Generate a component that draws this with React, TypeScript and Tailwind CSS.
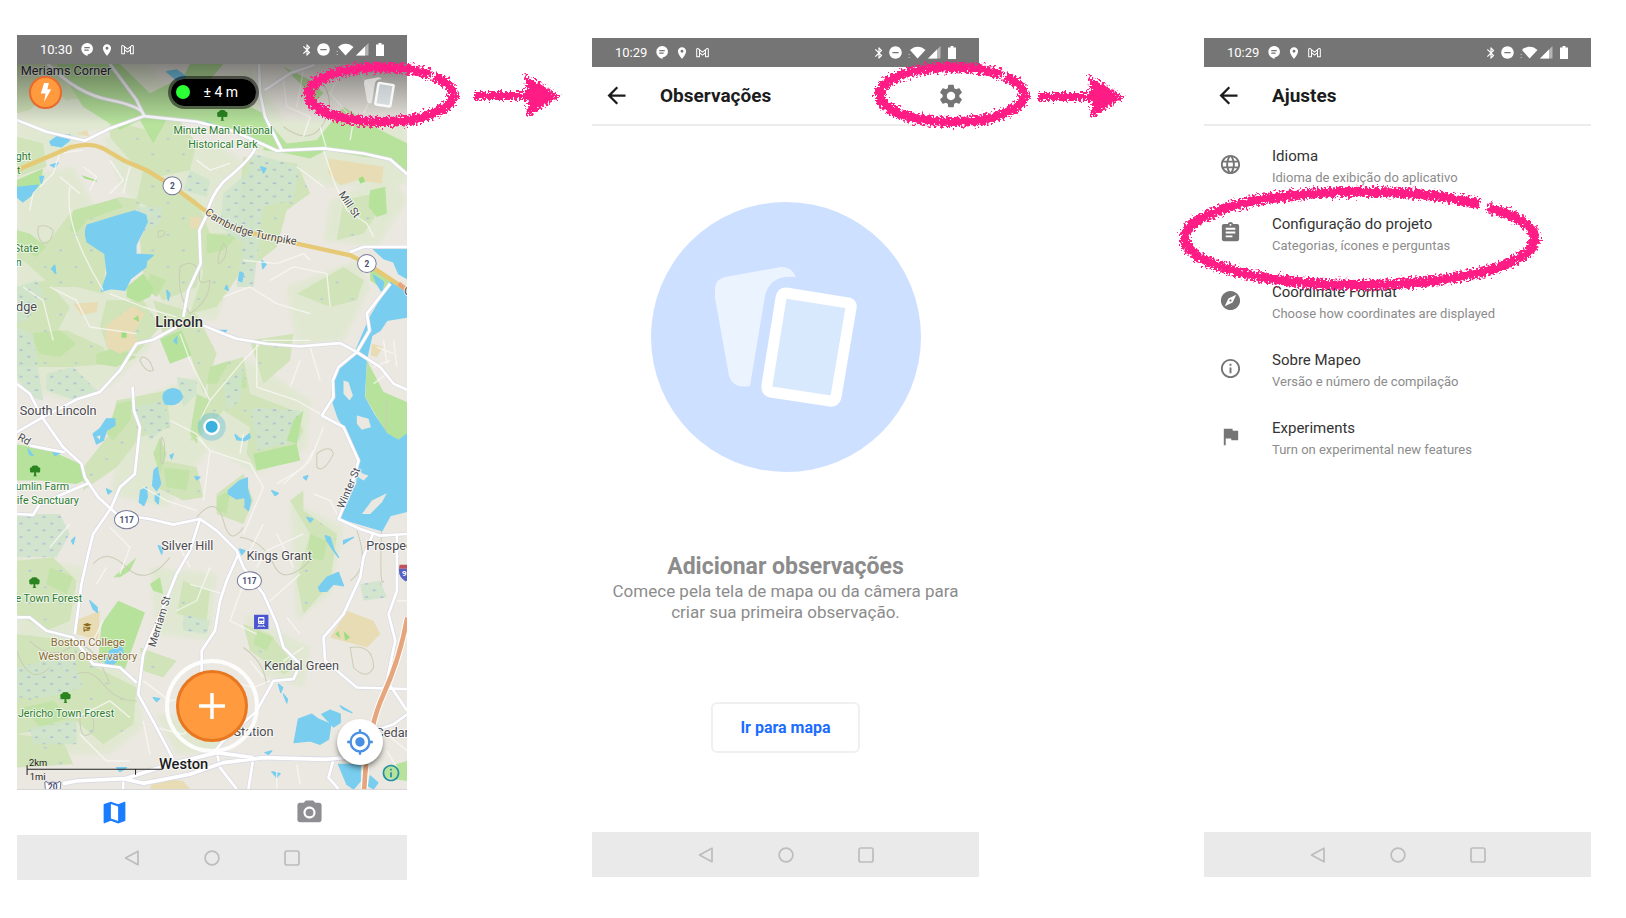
import React from "react";
import {
  MdArrowBack,
  MdAssignment,
  MdBluetooth,
  MdCameraAlt,
  MdExplore,
  MdFlag,
  MdInfoOutline,
  MdLanguage,
  MdMap,
  MdMyLocation,
  MdPlace,
  MdRemoveCircle,
  MdSettings,
} from "react-icons/md";
import type { IconType } from "react-icons";

const PINK = "#ff1a84";

/* ---------- Brush annotations ---------- */

function BrushFilter({ id, seed }: { id: string; seed: number }) {
  return (
    <filter id={id} x="-10%" y="-20%" width="120%" height="140%">
      <feTurbulence type="fractalNoise" baseFrequency="0.42" numOctaves={3} seed={seed} result="noise" />
      <feDisplacementMap in="SourceGraphic" in2="noise" scale={11} xChannelSelector="R" yChannelSelector="G" />
    </filter>
  );
}

function BrushRing({ id, rx, ry, className }: { id: string; rx: number; ry: number; className: string }) {
  const w = rx * 2 + 16;
  const h = ry * 2 + 16;
  const at = (deg: number, k = 1) => {
    const a = (deg * Math.PI) / 180;
    return `${(w / 2 + rx * k * Math.cos(a)).toFixed(1)} ${(h / 2 + ry * k * Math.sin(a)).toFixed(1)}`;
  };
  return (
    <svg
      aria-hidden="true"
      viewBox={`0 0 ${w} ${h}`}
      width={w}
      height={h}
      className={`pointer-events-none absolute z-20 max-w-none overflow-visible ${className}`}
    >
      <BrushFilter id={id} seed={rx} />
      <path
        d={`M${at(-43)} A${rx} ${ry} 0 0 1 ${at(90)} A${rx} ${ry} 0 0 1 ${at(180)} A${rx} ${ry} 0 0 1 ${at(-48, 1.02)}`}
        fill="none"
        stroke={PINK}
        strokeWidth={10}
        filter={`url(#${id})`}
      />
    </svg>
  );
}

function BrushArrow({ id }: { id: string }) {
  return (
    <svg aria-hidden="true" viewBox="0 0 92 52" width={92} height={52} className="shrink-0">
      <BrushFilter id={id} seed={7} />
      <g filter={`url(#${id})`} fill={PINK}>
        <path d="M2 23H56V31H2Z" />
        <path d="M53 5 88 27 56 48Z" />
      </g>
    </svg>
  );
}

/* ---------- Shared phone chrome ---------- */

function StatusBar({ time }: { time: string }) {
  return (
    <div className="flex h-[29px] shrink-0 items-center justify-between bg-[#757575] px-[23px] text-white">
      <div className="flex items-center gap-[7px]">
        <span className="pr-[2px] text-[13px] leading-4">{time}</span>
        <svg viewBox="0 0 22 24" width={12} height={13} aria-hidden="true">
          <path d="M11 0a10.500 10.500 0 0 1 1 21v3c-6-2-11.500-7-11.500-13.500A10.500 10.500 0 0 1 11 0Z" fill="#fff" />
          <path d="M6 8.500h10M6 13h8" stroke="#757575" strokeWidth={2.200} />
        </svg>
        <MdPlace size={14} aria-hidden="true" />
        <svg viewBox="0 0 28 22" width={13} height={11} aria-hidden="true">
          <path
            d="M1.500 20V3.500L4 2l10 8L24 2l2.500 1.500V20H20.500V11.500L14 16.500 7.500 11.500V20ZM7.500 11.500V5M20.500 11.500V5"
            fill="none"
            stroke="#fff"
            strokeWidth={2.200}
            strokeLinejoin="round"
          />
        </svg>
      </div>
      <div className="flex items-center">
        <MdBluetooth size={14} aria-hidden="true" className="mr-[2px]" />
        <MdRemoveCircle size={15} aria-hidden="true" className="mr-[5px]" />
        <svg viewBox="0 0 36 26" width={18} height={13} aria-hidden="true" className="mr-[2px]">
          <path d="M19 25 4 8C13-1 26-1 35 8Z" fill="#fff" />
          <path d="M1 17h3M1 23h3" stroke="#b5b5b5" strokeWidth={2} />
        </svg>
        <svg viewBox="0 0 26 26" width={13} height={13} aria-hidden="true" className="mr-[7px]">
          <path d="M0 25 25 0V25Z" fill="#b5b5b5" />
          <path d="M0 25 18 7V25Z" fill="#fff" />
        </svg>
        <svg viewBox="0 0 16 26" width={8} height={13} aria-hidden="true">
          <path d="M5 0h6v3h5v23H0V3h5Z" fill="#fff" />
        </svg>
      </div>
    </div>
  );
}

function NavBar() {
  return (
    <nav aria-label="Android" className="flex h-[45px] shrink-0 items-center justify-center gap-16 bg-[#eaeaea]">
      <button aria-label="Voltar">
        <svg viewBox="0 0 16 16" width={16} height={16} fill="none" stroke="#bdbdbd" strokeWidth={1.700} strokeLinejoin="round">
          <path d="M1.500 8 14 1.200V14.800Z" />
        </svg>
      </button>
      <button aria-label="Início">
        <svg viewBox="0 0 16 16" width={16} height={16} fill="none" stroke="#bdbdbd" strokeWidth={1.700}>
          <circle cx={8} cy={8} r={6.900} />
        </svg>
      </button>
      <button aria-label="Recentes">
        <svg viewBox="0 0 16 16" width={16} height={16} fill="none" stroke="#bdbdbd" strokeWidth={1.700}>
          <rect x={1} y={1} width={14} height={14} rx={2} />
        </svg>
      </button>
    </nav>
  );
}

function Header({ title, children }: { title: string; children?: React.ReactNode }) {
  return (
    <header className="flex h-[59px] shrink-0 items-center border-b-2 border-[#ececec] pl-[11px] text-[#1c1c1c]">
      <button aria-label="Voltar" className="mr-[30px]">
        <MdArrowBack size={27} />
      </button>
      <h1 className="flex-1 text-[19px] leading-6 font-bold">{title}</h1>
      {children}
    </header>
  );
}

/* ---------- Map ---------- */

const MEADOW = [
  "M21 230 190 200 260 330 210 420 300 560 440 600 420 740 300 860 180 900 21 860Z",
  "M280 110 620 130 720 200 700 420 620 660 470 640 400 500 420 380 330 250Z",
  "M21 1370 220 1400 190 1600 260 1660 380 1740 400 1880 300 1960 21 1960Z",
  "M360 900 560 830 720 780 900 900 890 1040 740 1120 600 1040 470 1220 300 1180Z",
  "M21-108 420-108 520 40 380 100 240 90 150 170 21 200Z",
  "M560-60 720-90 820 60 1191 60V250L960 260 760 180Z",
  "M960 300 1140 220 1191 300 1100 440 940 420Z",
  "M830 560 1040 480 1080 560 1000 720 860 740Z",
  "M700 1540 900 1640 880 1760 760 1720Z",
  "M420 1400 620 1420 600 1620 440 1600Z",
  "M840 1200 1000 1280 960 1480 860 1560Z",
  "M440 1840 620 1860 640 1950 500 1960Z",
];

const FOREST = [
  "M21-108H170L120-20 60 30 21 40Z",
  "M100-100 230-90 250-10 170 0 110-40Z",
  "M21 110 100 130 110 200 21 230Z",
  "M300 60 410 90 500 50 560 130 540 210 440 230 360 180 300 110Z",
  "M400 210 480 250 560 300 600 400 560 560 460 600 400 520 390 420 430 330 380 300Z",
  "M180 340 330 290 400 300 370 340 240 370 225 400 290 470 280 580 200 560 130 560 40 480 21 500V440L120 420Z",
  "M21 560 110 540 180 620 120 740 21 720Z",
  "M21 700 170 690 280 740 300 790 180 800 21 800Z",
  "M700 170 860 190 900 280 830 330 800 440 700 520 640 440 680 380Z",
  "M560 400 700 400 740 440 690 520 620 620 540 640 580 520Z",
  "M290 600 400 600 450 680 380 760 300 760 270 680Z",
  "M320 900 470 870 480 980 390 1010 320 1100 220 1170 220 1100 300 1000Z",
  "M600 800 700 770 720 880 850 930 880 990 850 1050 740 1110 710 1060 720 980 640 930 560 1020 540 1020 590 900Z",
  "M460 1080 560 1100 580 1190 520 1200 440 1160Z",
  "M840 1200 880 1170 880 1230 980 1300 960 1450 880 1540 860 1440 900 1300Z",
  "M21 1380 130 1370 200 1440 180 1560 110 1590 21 1540Z",
  "M21 1600 190 1620 260 1700 380 1760 370 1870 280 1930 200 1860 21 1900Z",
  "M700 1570 780 1600 860 1700 820 1720 720 1650Z",
  "M520 1440 600 1470 590 1560 500 1540Z",
  "M390 1640 500 1680 460 1730 400 1710Z",
  "M860 580 1000 500 1060 540 1040 600 960 620Z",
  "M1000 300 1090 280 1100 340 1060 400 980 420Z",
  "M620 1180 700 1120 730 1200 700 1270 620 1240Z",
  "M21 1900 160 1920 190 1990 21 2000Z",
  "M430 600 560 640 620 760 580 880 540 760 470 740Z",
  "M720 720 850 700 840 780 760 850Z",
];

const PARK = [
  "M140-108H330L420-20 520-70 540-108H640L600-60 720 20 760 40 800 150 740 130 640 80 470 60 430 130 390 60 330 90 220 20Z",
  "M770 60 830 130 920 120 960 70 1000 20 1110 90 1191 130V215L1140 180 1060 170 950 150 900 175 830 160 760 150Z",
  "M820-100 900-60 940-20 900 20 880-40Z",
  "M21 240 100 205 90 265 50 300 21 260Z",
  "M21 1032 110 1045 215 1092 222 1140 200 1150 90 1140 21 1140Z",
  "M1070 780 1120 875 1191 905V1000L1165 1020 1130 1000 1065 890Z",
  "M450 715 515 690 545 765 480 790Z",
  "M350 560 400 520 432 565 420 590 385 605 350 590Z",
  "M275 1570 325 1500 405 1535 375 1620 345 1705 265 1680Z",
  "M1080 270 1125 260 1130 340 1100 350 1075 320Z",
  "M1080 490 1140 540 1120 570 1080 540Z",
  "M730 1060 860 1030 870 1080 740 1110Z",
  "M310 1430 380 1370 360 1410 330 1430Z",
  "M420 1450 450 1430 460 1480 430 1470Z",
  "M1120 2000 1191 1980V2040L1120 2030Z",
  "M850 960 880 930 860 1030 830 1020Z",
];

/* Softer park tone for clearings and field edges. */
const FIELD = [
  "M560 880 600 900 560 1030 540 1000Z",
  "M640 840 700 810 710 860 660 870Z",
  "M190 330 320 295 340 320 230 360 200 400 180 390Z",
  "M21 390 60 400 110 440 80 470 21 440Z",
  "M60 700 150 690 200 730 150 770 90 760Z",
  "M260 760 320 740 380 770 320 800 260 790Z",
  "M420 520 470 540 440 590 410 570Z",
  "M320 910 370 900 360 960 310 1020 290 1000Z",
  "M430 1060 450 1010 470 1060 450 1120Z",
  "M460 1100 540 1110 530 1170 470 1160Z",
  "M590 400 680 410 640 450 590 460Z",
  "M600 800 660 780 620 850 590 850Z",
  "M900 1300 950 1320 940 1380 890 1370Z",
  "M740 1590 790 1610 770 1650 730 1630Z",
  "M620 1190 660 1170 650 1240 620 1230Z",
  "M120 1400 190 1430 170 1480 110 1450Z",
  "M40 1820 130 1800 180 1850 90 1880Z",
];

const WETLAND = [
  "M730 160 870 200 850 300 760 320 730 560 680 560 700 430 630 380 640 280 710 220Z",
  "M380 320 460 320 450 370 400 400Z",
  "M540 210 600 240 590 290 520 270Z",
  "M21 680 70 700 100 900 60 890 21 830Z",
  "M110 820 190 800 270 880 200 900 110 870Z",
  "M370 920 460 900 480 970 420 1020Z",
  "M720 920 870 930 870 1020 740 1050Z",
  "M21 1240 150 1240 180 1300 140 1370 21 1370Z",
  "M21 560 80 540 100 580 50 660 21 670Z",
  "M21 1700 190 1660 220 1760 110 1790 21 1790Z",
  "M60 1880 200 1860 200 1930 70 1930Z",
  "M520 1540 600 1560 590 1600 520 1590Z",
  "M1050 1450 1110 1440 1130 1490 1060 1500Z",
  "M560 840 500 830 520 920 560 880Z",
  "M640 850 700 800 690 900 650 930Z",
];

const SAND = [
  "M955 175 1120 200 1115 250 1040 240 990 255 955 220Z",
  "M190 610 265 605 260 635 215 645Z",
  "M285 680 370 615 405 640 370 700 390 730 330 760 290 740Z",
  "M195 1560 270 1530 265 1620 200 1600Z",
  "M1010 1530 1090 1560 1110 1600 1070 1640 960 1610Z",
  "M540 350 575 350 570 385 540 385Z",
  "M1085 730 1118 740 1100 770 1082 765Z",
  "M200 100 240 110 230 90Z",
  "M430 2030 520 2040 540 2064H420Z",
];

const WATER = [
  "M232 375 330 345 375 332 408 345 412 365 378 435 378 462 430 465 410 482 408 500 362 535 345 570 305 565 275 572 292 520 285 460 232 425Q222 395 232 375Z",
  "M1090 447H1191V535L1165 520 1150 485 1120 475Z",
  "M1140 545 1191 575V650L1130 660 1110 690 1085 705 1068 780 1062 890 1090 940 1130 1000 1165 1020 1191 1000V1232L1140 1245 1115 1290 985 1252 1040 1150 1045 1080 1010 990 985 955 968 905 970 840 985 800 1035 755 1080 650 1110 600Z",
  "M120 125 150 103 182 105 178 122 155 140 125 135Z",
  "M21 262 85 255 70 280 40 305 21 290Z",
  "M90 230 102 228 95 250ZM122 195 145 188 135 202Z",
  "M460 895Q455 870 490 865 520 870 515 895 500 918 465 910Z",
  "M250 1000 270 985 290 955 315 955 315 975 290 990 280 1020 260 1030Z",
  "M675 1002 690 1015 700 1015 718 1000 720 1012 705 1020 680 1018Z",
  "M655 1170 690 1140 712 1132 712 1165 722 1200 715 1230 705 1220 705 1190 680 1195 655 1180Z",
  "M432 1110 442 1100 452 1150 440 1170 428 1155Z",
  "M392 1170 410 1160 412 1190 402 1215 388 1205Z",
  "M436 1185 448 1180 445 1210 436 1200Z",
  "M285 1690 300 1650 335 1635 340 1660 300 1700Z",
  "M925 1460 950 1430 985 1415 1000 1455 970 1450 950 1472 930 1472Z",
  "M865 1855 905 1840 925 1855 962 1870 955 1915 930 1930 900 1920 852 1925Z",
  "M935 1840 960 1828 990 1840 990 1865 970 1878Z",
  "M985 1990 1050 1990 1050 2040 1030 2064 1010 2050Z",
  "M1080 2025 1103 2045 1090 2064 1075 2055Z",
  "M752 200 768 205 760 218ZM690 515 700 520 695 545 685 540ZM755 480 768 492 758 505ZM650 555 655 570 645 565Z",
  "M125 505 135 495 138 520ZM500 710 500 730 492 722ZM470 570 480 580 475 600Z",
  "M620 690 650 690 640 700ZM785 1170 805 1178 795 1185ZM880 1130 893 1125 888 1138ZM890 1250 908 1255 900 1265Z",
  "M240 1500 262 1520 262 1535 250 1525ZM805 1750 818 1760 812 1775ZM820 1780 832 1795 830 1806Z",
  "M945 1305 960 1310 970 1345 985 1370 970 1350 950 1320ZM1000 1320 1030 1310 1000 1330Z",
  "M555 1128 570 1130 560 1138ZM480 1065 490 1060 485 1075ZM55 1045 70 1065 60 1062ZM130 1055 150 1058 135 1065Z",
  "M785 2012 810 2018 800 2030ZM430 1790 450 1793 440 1802ZM765 1955 785 1950 775 1960ZM990 1815 1025 1835 1000 1825Z",
  "M1115 575 1120 545 1090 525 1100 550ZM470-85 500-90 530-70 500-60ZM590 65 605 72 595 76ZM320 2000 350 2000 330 2012Z",
  "M290 1165 305 1172 295 1180ZM185 1320 195 1310 190 1330ZM445 1335 460 1340 455 1360ZM688 1345 705 1350 695 1362Z",
];

const ISLANDS = [
  "M1000 840 1015 845 1028 885 1018 900 1000 880Z",
  "M1040 945 1075 955 1082 980 1055 988 1040 970Z",
  "M1055 1240 1085 1200 1130 1178 1115 1205 1080 1240Z",
  "M1040 1105 1060 1120 1075 1125 1060 1140 1045 1130Z",
  "M260 1008 272 1005 270 1018Z",
];

const MAJOR_ROADS = [
  "M21 60 110 95 225 122 300 85 403 48 560 65 660 90 720 115 800 152 940 145 1060 160 1140 178 1191 222",
  "M114-108Q200-20 300 0T403 48M300-108 380 0 403 48",
  "M747-108 750-20 765 50 815 150M764-30 840-80 913-105",
  "M735 145Q720 180 640 245 600 290 590 345L568 390 572 490 535 570 520 650",
  "M500 680 430 718 380 730 330 810 270 875 200 897 100 950 21 995",
  "M580 675 640 700 680 715 770 730 870 738 990 728 1040 755 1110 800 1150 850 1191 868",
  "M21 850 60 880 100 955 160 1040 215 1090 225 1130 265 1190 320 1240 420 1255 490 1272 570 1255 620 1290 680 1350 700 1400 760 1480 800 1570 820 1640 870 1690 850 1735 790 1740 740 1830 640 1920 615 1950",
  "M368 860 372 930 390 980 375 1120 330 1160 305 1220 250 1300 235 1360 215 1450 195 1600",
  "M60 1035 110 1045 165 1055M21 1240 70 1243 90 1210 235 1148",
  "M570 1255 540 1350 500 1420 480 1470 400 1660 385 1780 440 1880 490 1975",
  "M685 1360 650 1440 630 1500 615 1590 575 1650V1720",
  "M1040 755 985 800 968 840 970 890 935 945 1000 980 1045 1080 1020 1170 985 1255 1050 1285 1110 1305 1191 1300",
  "M1020 455 1060 440H1191M1140 550 1070 640 1078 690 1040 755",
  "M1090 1295 1060 1370 1050 1430 1000 1540 940 1610 945 1680 1040 1760 1191 1765",
  "M1160 1300V1470L1135 1540 1155 1620 1130 1740 1191 1830",
  "M21 1550 60 1550 110 1590 190 1610 250 1690 330 1700 380 1745",
  "M620 1950 630 2000 680 2064M730 1970 715 2064M970 1975 955 2030 985 2064M340 2035V2064",
  "M1191 1840 1150 1870 1090 1890",
];

const MINOR_ROADS = [
  "M60 330 70 280 130 220 150 160 220 150M150 230 210 280M180 260Q170 330 200 410T280 570",
  "M220 200 260 230 240 270M300 180 340 240 300 280M360 200 340 280",
  "M560 180 600 210 660 190M820-60 830 20 900 50 880 110M880-90 860 20",
  "M930 80 950 150M1000-100 960-20 1030 60 1020 120M1050-80 1090-20 1060 40",
  "M940 150 970 240 1010 330 1070 370 1090 410M860 200 940 260",
  "M700 480 800 490 880 460 900 480M780 540 850 500 950 520 960 620M640 590 720 560 800 610 900 640",
  "M120 560 200 600 240 680 380 700M40 560 100 600 130 720M300 580 400 620 500 650",
  "M510 700 540 780 600 900 570 960M600 900 700 780 760 720 900 720",
  "M740 720 740 860 860 900 930 940M840 860 870 780M900 740 930 840",
  "M560 1010 600 1050 720 1090 760 1160 700 1300M600 1050 580 1200",
  "M480 960 560 1000 590 1040M700 1000 690 1060M800 1150 880 1100 910 1050",
  "M400 1160 470 1200 560 1230M760 1270 720 1350M880 1300 770 1350 740 1400M800 1300 850 1400",
  "M300 1280 360 1340 330 1420M180 1270 120 1340M260 1450 290 1400",
  "M600 1400 560 1500 500 1530M540 1450 640 1480M700 1450 660 1560 740 1600",
  "M870 1420 780 1500M830 1550 870 1600M880 1640 820 1680",
  "M400 1740 480 1800 520 1790M440 1880 520 1900 560 1870M400 1860 420 1960",
  "M800 2010 800 2064M860 1990 870 2050M1130 1900 1191 1950M1130 1950 1160 2000",
  "M200 1850 300 1800 360 1850M210 1900 290 1980 360 1980M250 1620 280 1560",
  "M1090 800 1140 780M1090 850 1130 820M1120 720 1130 790M1150 720 1160 800M1100 740 1150 760",
  "M1160 1500H1191M650 1740 730 1760 780 1740M720 1680 760 1730",
  "M940 980 900 1080 820 1150M910 1180 960 1200 980 1240M500 1320 540 1400",
];

const CONTOURS = [
  "M85 380Q110 370 130 390 125 430 100 430 80 410 85 380Z",
  "M445 395Q460 385 465 400 455 415 445 410ZM640 430Q620 470 625 490 650 480 650 440Z",
  "M510 500Q550 470 570 520 560 560 600 540 600 600 540 640 500 580 510 500Z",
  "M395 770Q420 770 430 810 410 820 390 780ZM455 1010Q470 1020 460 1090 445 1090 455 1010Z",
  "M920 1060Q960 1030 970 1060 940 1120 920 1100Z",
  "M250 1390Q290 1340 350 1400T480 1370M690 1310Q760 1320 790 1390T900 1380M1040 1290Q1080 1400 1020 1440",
  "M60 1620Q120 1680 180 1640T300 1750M21 1650Q60 1760 120 1700M210 1850Q260 1820 250 1890 210 1930 210 1850Z",
  "M820 80Q900 140 940 70T930-60",
  "M1020 1640Q1090 1630 1090 1700 1070 1740 1030 1700ZM560 1250Q620 1180 640 1260T700 1280",
  "M200 1720Q240 1700 280 1750T380 1800M700 1640Q760 1680 770 1750M1130 900Q1100 1500 1120 1440",
];

function Tree({ x, y }: { x: number; y: number }) {
  return (
    <g transform={`translate(${x} ${y})`} fill="#2a8420">
      <path d="M0-16Q9-18 10-11 18-10 15-2 17 6 8 5L3 4V13L6 16H-6L-3 13V4L-8 5Q-17 6-15-2-18-10-10-11-9-18 0-16Z" />
    </g>
  );
}

function RoadShield({ x, y, label, wide }: { x: number; y: number; label: string; wide?: boolean }) {
  return (
    <g transform={`translate(${x} ${y})`}>
      <ellipse rx={wide ? 36 : 28} ry={27} fill="#fff" stroke="#7a7e9c" strokeWidth={3} />
      <text textAnchor="middle" y={9} className="fill-[#4a4e73] text-[25px] font-bold" strokeWidth={0}>
        {label}
      </text>
    </g>
  );
}

function TownMap() {
  return (
    <svg
      role="img"
      aria-label="Mapa"
      viewBox="21 -108 1170 2172"
      preserveAspectRatio="xMidYMid slice"
      className="absolute inset-0 h-full w-full bg-[#ebe8e1]"
    >
      <defs>
        <pattern id="marsh" width={46} height={40} patternUnits="userSpaceOnUse">
          <rect width={46} height={40} fill="#cfe4cb" />
          <path d="M8 9h6M31 29h6" stroke="#9aa9dc" strokeWidth={4} strokeLinecap="round" />
        </pattern>
        <pattern id="speckle" width={92} height={96} patternUnits="userSpaceOnUse">
          <path d="M12 20h5M58 66h5" stroke="#adc3e2" strokeWidth={4} strokeLinecap="round" />
        </pattern>
        <path id="turnpike" d="M583 340Q640 385 700 402T868 436" />
        <filter id="feather" x="-5%" y="-5%" width="110%" height="110%">
          <feGaussianBlur stdDeviation={7} />
        </filter>
      </defs>

      <g fill="#dde8cd" opacity={0.75} filter="url(#feather)">{MEADOW.map((d) => <path key={d} d={d} />)}</g>
      <g fill="#d1e3b9">{FOREST.map((d) => <path key={d} d={d} />)}</g>
      <g fill="url(#speckle)">{FOREST.map((d) => <path key={d} d={d} />)}</g>
      <g fill="#c3e2a8">{FIELD.map((d) => <path key={d} d={d} />)}</g>
      <g fill="url(#marsh)" opacity={0.85}>{WETLAND.map((d) => <path key={d} d={d} />)}</g>
      <g fill="#b6e29c">{PARK.map((d) => <path key={d} d={d} />)}</g>
      <g fill="#e8dcb5">{SAND.map((d) => <path key={d} d={d} />)}</g>
      <g fill="#9fdd82">
        <path d="M370 655 385 645 388 665ZM335 695H350V712H335ZM1045 235 1058 228 1065 245 1050 250ZM215 225 260 240 262 245 225 235ZM1000 1590 1020 1610 1005 1620ZM975 1600 985 1590 990 1612Z" />
      </g>
      <g fill="none" stroke="#c9cdb6" strokeWidth={3}>
        {CONTOURS.map((d) => <path key={d} d={d} />)}
      </g>
      <g fill="#79cef0" stroke="#79cef0" strokeWidth={4} strokeLinejoin="round">
        {WATER.map((d) => <path key={d} d={d} />)}
      </g>
      <g fill="#ebe8e1">{ISLANDS.map((d) => <path key={d} d={d} />)}</g>
      <g fill="none" stroke="#f9f8f5" strokeWidth={4} strokeLinejoin="round" opacity={0.8}>
        {MINOR_ROADS.map((d) => <path key={d} d={d} />)}
      </g>
      <g fill="none" stroke="#d9d9e6" strokeWidth={12} strokeLinejoin="round">
        {MAJOR_ROADS.map((d) => <path key={d} d={d} />)}
      </g>
      <g fill="none" stroke="#fff" strokeWidth={8} strokeLinejoin="round">
        {MAJOR_ROADS.map((d) => <path key={d} d={d} />)}
      </g>
      <g fill="none" strokeLinejoin="round">
        <path d="M160 2048 200 2040 340 2033 400 2047 540 2020 640 1985 760 1970 950 1975 1060 1965M340 2035 480 1990 620 1955 730 1970" stroke="#d9d9e6" strokeWidth={16} />
        <path d="M160 2048 200 2040 340 2033 400 2047 540 2020 640 1985 760 1970 950 1975 1060 1965M340 2035 480 1990 620 1955 730 1970" stroke="#fff" strokeWidth={11} />
        <path d="M21 210 180 142Q240 125 280 145L340 180 410 210 487 257 590 335Q640 375 720 397L860 430 1020 465 1070 490 1191 570" stroke="#e6c975" strokeWidth={13} />
        <path d="M1191 1550Q1170 1670 1120 1780T1062 2064" stroke="#fff" strokeWidth={20} />
        <path d="M1191 1550Q1170 1670 1120 1780T1062 2064M1165 550 1191 570" stroke="#e6a67d" strokeWidth={14} />
      </g>

      <Tree x={637} y={46} />
      <Tree x={76} y={1111} />
      <Tree x={74} y={1446} />
      <Tree x={167} y={1790} />
      <RoadShield x={487} y={257} label="2" />
      <RoadShield x={1070} y={490} label="2" />
      <RoadShield x={350} y={1257} label="117" wide />
      <RoadShield x={718} y={1440} label="117" wide />
      <g transform="translate(129 2055)">
        <path d="M-24-10-20-14-14-9 0-12 14-9 20-14 24-10 22 12H-22Z" fill="#fff" stroke="#7a7e9c" strokeWidth={3} />
        <text textAnchor="middle" y={13} className="fill-[#4a4e73] text-[25px] font-bold">20</text>
      </g>
      <g transform="translate(1186 1412)">
        <path d="M-18-20H18V-8H-20Z" fill="#c2505c" />
        <path d="M-20-8H20Q22 18 0 30-22 18-20-8Z" fill="#5763c4" />
        <text x={-11} y={14} className="fill-white text-[24px] font-bold">95</text>
      </g>
      <g transform="translate(732 1542)">
        <rect width={43} height={43} fill="#4a56d0" />
        <rect x={12} y={7} width={19} height={21} rx={3} fill="#fff" />
        <path d="M15 11H28V18H15ZM16 22H19V25H16ZM24 22H27V25H24Z" fill="#4a56d0" />
        <path d="M16 30 11 37M27 30 32 37M14 34H29" fill="none" stroke="#fff" strokeWidth={2.500} />
      </g>
      <g fill="#8a6b1e">
        <path d="M219 1572 232 1567 246 1572 232 1577ZM224 1577 232 1580 241 1577V1586H224ZM221 1577V1592H226V1590H240" />
      </g>

      <g
        strokeWidth={6}
        stroke="#ffffffb0"
        strokeLinejoin="round"
        paintOrder="stroke"
        className="fill-[#4b4b50] text-[38px]"
      >
        <text x={33} y={-76} className="fill-[#2b2b2e]">Meriams Corner</text>
        <text x={30} y={943}>South Lincoln</text>
        <text x={454} y={1348}>Silver Hill</text>
        <text x={709} y={1379}>Kings Grant</text>
        <text x={1068} y={1347}>Prospect</text>
        <text x={762} y={1708}>Kendal Green</text>
        <text x={640} y={1906}>n Station</text>
        <text x={1096} y={1908}>Cedar</text>
        <text x={19} y={633}>dge</text>
        <text x={436} y={679} className="fill-[#2b2b2e] text-[44px] font-medium">Lincoln</text>
        <text x={447} y={2004} className="fill-[#1b1b1d] text-[44px] font-medium">Weston</text>

        <g className="text-[32px]">
          <text className="text-[33px]"><textPath href="#turnpike">Cambridge Turnpike</textPath></text>
          <text transform="translate(984 282) rotate(56)">Mill St</text>
          <text transform="translate(1000 1226) rotate(-67)">Winter St</text>
          <text transform="translate(436 1640) rotate(-73)">Merriam St</text>
          <text transform="translate(22 1016) rotate(30)">Rd</text>
          <text x={1182} y={584}>C</text>
        </g>

        <g className="fill-[#2e7d32] text-[32px]">
          <text x={639} y={103} textAnchor="middle">Minute Man National</text>
          <text x={639} y={144} textAnchor="middle">Historical Park</text>
          <text x={18} y={181}>ght</text>
          <text x={22} y={221}>t</text>
          <text x={12} y={456}>State</text>
          <text x={18} y={496}>n</text>
          <text x={178} y={1169} textAnchor="end">umlin Farm</text>
          <text x={207} y={1210} textAnchor="end">life Sanctuary</text>
          <text x={217} y={1503} textAnchor="end">e Town Forest</text>
          <text x={313} y={1848} textAnchor="end">Jericho Town Forest</text>
        </g>
        <g className="fill-[#8a6b35] text-[33px]" textAnchor="middle">
          <text x={234} y={1636}>Boston College</text>
          <text x={234} y={1677}>Weston Observatory</text>
        </g>
      </g>

      <g fill="none" stroke="#222" strokeWidth={3}>
        <path d="M52 1993V2022M52 2005H458M377 2005V2021" />
      </g>
      <g className="fill-[#222] text-[28px]">
        <text x={58} y={1995}>2km</text>
        <text x={60} y={2037}>1mi</text>
      </g>

      <circle cx={605} cy={979} r={42} fill="#3cb1e0" opacity={0.3} />
      <circle cx={605} cy={979} r={25} fill="#fff" />
      <circle cx={605} cy={979} r={18} fill="#3cb1e0" />
    </svg>
  );
}

function CardsIcon({ size }: { size: number }) {
  return (
    <svg viewBox="0 0 142 142" width={size} height={size} aria-hidden="true">
      <path
        d="M10 11 66 1Q76 0 81 11 55 8 50 30L35 120Q18 123 14 110L0 32V22Q1 13 10 11Z"
        fill="#fff"
        fillOpacity={0.6}
      />
      <path d="M71 27 134 37Q137 38 136 42L121 131Q120 136 115 135L56 126Q51 125 52 119L66 32Q67 27 71 27Z" fill="#e4f1fb" fillOpacity={0.55} stroke="#fff" strokeWidth={11} />
    </svg>
  );
}

function MapPhone() {
  return (
    <section aria-label="Mapa" className="relative mt-[35px] mb-[38px] flex flex-col">
      <StatusBar time="10:30" />
      <div className="relative min-h-[600px] flex-1 overflow-hidden">
        <TownMap />
        <div className="absolute inset-x-0 top-0 h-[60px] bg-linear-to-b from-black/45 to-transparent" />
        <button
          aria-label="Adicionar observação"
          className="absolute bottom-9 left-1/2 flex size-[94px] -translate-x-1/2 items-center justify-center rounded-full border-4 border-white/90"
        >
          <span className="flex size-[72px] items-center justify-center rounded-full border-[3px] border-[#e87722] bg-[#ff9a3f]">
            <svg viewBox="0 0 26 26" width={26} height={26} stroke="#fff" strokeWidth={3.500}>
              <path d="M13 0V26M0 13H26" />
            </svg>
          </span>
        </button>
        <button
          aria-label="Minha localização"
          className="absolute right-6 bottom-6 flex size-[46px] items-center justify-center rounded-full bg-white text-[#4a90e2] shadow-md shadow-black/40"
        >
          <MdMyLocation size={28} />
        </button>
        <a href="#info" aria-label="Informações do mapa" className="absolute right-[6px] bottom-[6px] text-[#1f8fa3]">
          <MdInfoOutline size={20} />
        </a>
      </div>
      <div className="absolute inset-x-3 top-[37px] z-10 flex h-10 items-center justify-between">
        <span className="flex size-[33px] items-center justify-center rounded-full border-2 border-[#e9692c] bg-[#ff9a3f]">
          <svg viewBox="0 0 12 20" width={12} height={19} aria-hidden="true">
            <path d="M4 0H9L7.500 6.500H11.500L4 20 5.500 11H0.500Z" fill="#fff" />
          </svg>
        </span>
        <span className="flex h-[33px] w-[91px] items-center gap-[14px] rounded-full border-3 border-black/50 bg-black bg-clip-padding pl-[5px] text-[14px] leading-4 text-white">
          <span className="size-[14px] rounded-full bg-[#2bff36]" />± 4 m
        </span>
        <button aria-label="Observações" className="opacity-90">
          <CardsIcon size={31} />
        </button>
      </div>
      <BrushRing id="brush-cards" rx={72} ry={27} className="top-[25px] -right-[54px]" />
      <div className="grid h-[46px] shrink-0 grid-cols-2 border-t border-[#d8d8d8] bg-white">
        <button aria-label="Mapa" className="flex items-center justify-center text-[#1a7cff]">
          <MdMap size={29} />
        </button>
        <button aria-label="Câmera" className="flex items-center justify-center text-[#8e8e93]">
          <MdCameraAlt size={29} />
        </button>
      </div>
      <NavBar />
    </section>
  );
}

/* ---------- Observations ---------- */

function ObservationsPhone() {
  return (
    <section aria-label="Observações" className="relative mt-[38px] mb-[41px] flex flex-col">
      <StatusBar time="10:29" />
      <Header title="Observações">
        <button aria-label="Ajustes" className="mr-[14px] text-[#757575]">
          <MdSettings size={28} />
        </button>
      </Header>
      <BrushRing id="brush-settings" rx={72} ry={27} className="top-[22px] -right-[53px]" />
      <main className="flex flex-1 flex-col items-center px-4 pt-[76px] text-center text-[#8c8c8c]">
        <div className="flex size-[270px] shrink-0 items-center justify-center rounded-full bg-[#cde0ff]">
          <CardsIcon size={142} />
        </div>
        <h2 className="mt-[81px] text-[23px] leading-7 font-bold">Adicionar observações</h2>
        <p className="max-w-[355px] text-[17px] leading-[21px]">
          Comece pela tela de mapa ou da câmera para criar sua primeira observação.
        </p>
        <button className="mt-[79px] h-[51px] w-[149px] rounded-md border-2 border-[#f0f0f0] text-[16px] leading-5 font-bold text-[#1a6dff]">
          Ir para mapa
        </button>
      </main>
      <NavBar />
    </section>
  );
}

/* ---------- Settings ---------- */

type Setting = { icon: IconType; title: string; detail: string; marked?: boolean };

const SETTINGS: Setting[] = [
  { icon: MdLanguage, title: "Idioma", detail: "Idioma de exibição do aplicativo" },
  { icon: MdAssignment, title: "Configuração do projeto", detail: "Categorias, ícones e perguntas", marked: true },
  { icon: MdExplore, title: "Coordinate Format", detail: "Choose how coordinates are displayed" },
  { icon: MdInfoOutline, title: "Sobre Mapeo", detail: "Versão e número de compilação" },
  { icon: MdFlag, title: "Experiments", detail: "Turn on experimental new features" },
];

function SettingsPhone() {
  return (
    <section aria-label="Ajustes" className="mt-[38px] mb-[41px] flex flex-col">
      <StatusBar time="10:29" />
      <Header title="Ajustes" />
      <ul className="flex-1 pt-[6px]">
        {SETTINGS.map(({ icon: Icon, title, detail, marked }) => (
          <li key={title} className="relative">
            <button className="flex h-[68px] w-full items-start gap-[30px] pt-[14px] pl-[15px] text-left">
              <Icon size={23} className="mt-[7px] shrink-0 text-[#757575]" aria-hidden="true" />
              <span className="flex flex-col leading-[21px]">
                <span className="text-[15px] text-[#333]">{title}</span>
                <span className="text-[13px] text-[#8c8c8c]">{detail}</span>
              </span>
            </button>
            {marked && <BrushRing id="brush-config" rx={175} ry={46} className="-top-[15px] -left-[27px]" />}
          </li>
        ))}
      </ul>
      <NavBar />
    </section>
  );
}

export default function App() {
  return (
    <div className="grid min-h-screen grid-cols-[17fr_390fr_185fr_387fr_225fr_387fr_35fr] overflow-x-hidden bg-white font-[Roboto,sans-serif]">
      <div />
      <MapPhone />
      <div className="pt-[69px] pl-[65px]">
        <BrushArrow id="brush-arrow-a" />
      </div>
      <ObservationsPhone />
      <div className="pt-[70px] pl-[57px]">
        <BrushArrow id="brush-arrow-b" />
      </div>
      <SettingsPhone />
      <div />
    </div>
  );
}
